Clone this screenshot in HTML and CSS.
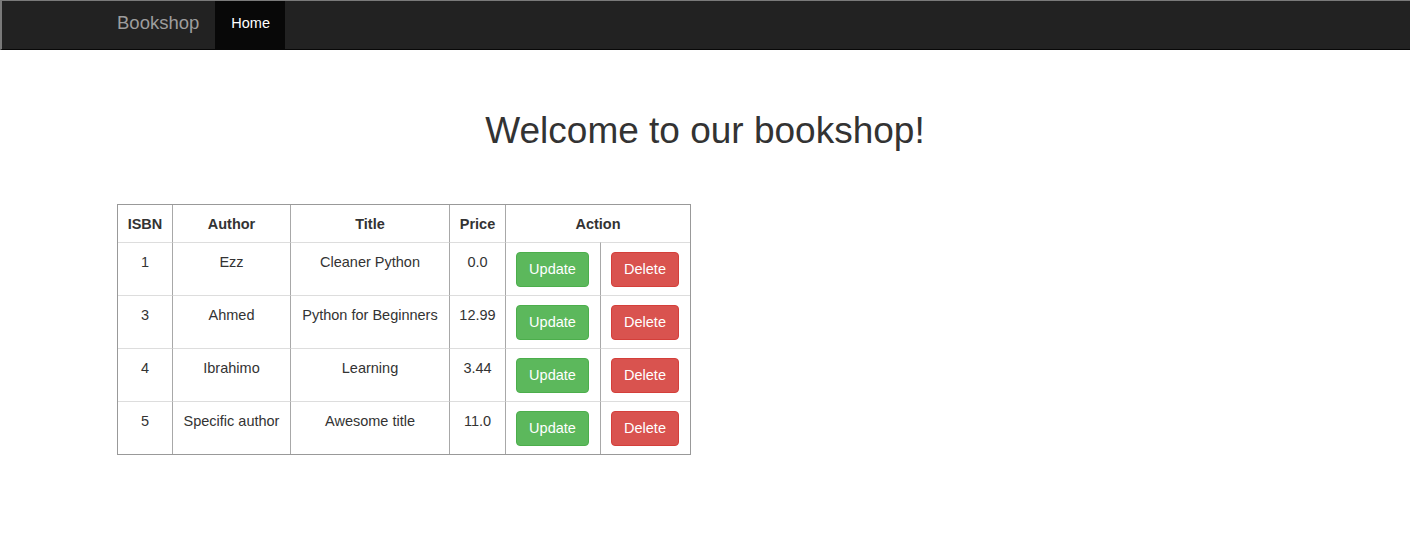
FILE: index.html
```html
<!DOCTYPE html>
<html>
<head>
<meta charset="utf-8">
<title>Bookshop</title>
<link rel="stylesheet" href="styles.css">
</head>
<body>
<nav class="navbar">
  <div class="nav-inner">
    <a class="brand" href="#">Bookshop</a>
    <ul class="nav">
      <li class="active"><a href="#">Home</a></li>
    </ul>
  </div>
</nav>
<h1 class="title">Welcome to our bookshop!</h1>
<div class="container">
  <table class="books">
    <colgroup>
      <col class="c-isbn"><col class="c-author"><col class="c-title"><col class="c-price"><col class="c-upd"><col class="c-del">
    </colgroup>
    <thead>
      <tr><th>ISBN</th><th>Author</th><th>Title</th><th>Price</th><th colspan="2">Action</th></tr>
    </thead>
    <tbody>
      <tr><td>1</td><td>Ezz</td><td>Cleaner Python</td><td>0.0</td><td><button class="btn btn-success">Update</button></td><td><button class="btn btn-danger">Delete</button></td></tr>
      <tr><td>3</td><td>Ahmed</td><td>Python for Beginners</td><td>12.99</td><td><button class="btn btn-success">Update</button></td><td><button class="btn btn-danger">Delete</button></td></tr>
      <tr><td>4</td><td>Ibrahimo</td><td>Learning</td><td>3.44</td><td><button class="btn btn-success">Update</button></td><td><button class="btn btn-danger">Delete</button></td></tr>
      <tr><td>5</td><td>Specific author</td><td>Awesome title</td><td>11.0</td><td><button class="btn btn-success">Update</button></td><td><button class="btn btn-danger">Delete</button></td></tr>
    </tbody>
  </table>
</div>
</body>
</html>
```
FILE: styles.css
```css
* { box-sizing: border-box; }
html, body { margin: 0; padding: 0; background: #fff; }
body {
  font-family: "Liberation Sans", Arial, Helvetica, sans-serif;
  font-size: 14.5px;
  line-height: 20px;
  color: #333;
}
.navbar {
  height: 50px;
  background: #222;
  border-top: 1px solid #7a7a7a;
  border-left: 2px solid #7a7a7a;
  border-bottom: 1px solid #080808;
}
.nav-inner {
  display: flex;
  height: 48px;
  padding-left: 100px;
}
.brand {
  display: block;
  padding: 12px 16px 0 15px;
  font-size: 18.5px;
  line-height: 20px;
  color: #9d9d9d;
  text-decoration: none;
}
.nav {
  display: flex;
  list-style: none;
  margin: 0;
  padding: 0;
}
.nav a {
  display: block;
  height: 48px;
  padding: 12px 15px 0 16px;
  line-height: 20px;
  color: #9d9d9d;
  text-decoration: none;
}
.nav .active a {
  background: #080808;
  color: #fff;
}
.title {
  margin: 61px 0 0;
  font-size: 37px;
  line-height: 40px;
  font-weight: 500;
  text-align: center;
  color: #333;
}
.container {
  padding-left: 117px;
  padding-top: 53px;
}
.books {
  border-collapse: separate;
  border-spacing: 0;
  table-layout: fixed;
  width: 574px;
  border: 1px solid #999;
}
.c-isbn { width: 54px; }
.c-author { width: 118px; }
.c-title { width: 159px; }
.c-price { width: 56px; }
.c-upd { width: 95px; }
.c-del { width: 90px; }
.books th {
  padding: 9px 4px 7px;
  line-height: 21px;
  font-weight: bold;
  text-align: center;
  vertical-align: middle;
}
.books td {
  padding: 9px 4px 8px;
  line-height: 21px;
  text-align: center;
  vertical-align: top;
  border-top: 1px solid #ddd;
  white-space: nowrap;
}
.books td .btn { margin-right: 1px; }
.books th + th, .books td + td {
  border-left: 1px solid #a8a8a8;
}
.btn {
  display: inline-block;
  font-family: inherit;
  font-size: 14.5px;
  line-height: 21px;
  padding: 6px 12px;
  border: 1px solid transparent;
  border-radius: 4px;
  color: #fff;
  cursor: pointer;
}
.btn-success { background: #5cb85c; border-color: #4cae4c; }
.btn-danger { background: #d9534f; border-color: #d43f3a; }
```
